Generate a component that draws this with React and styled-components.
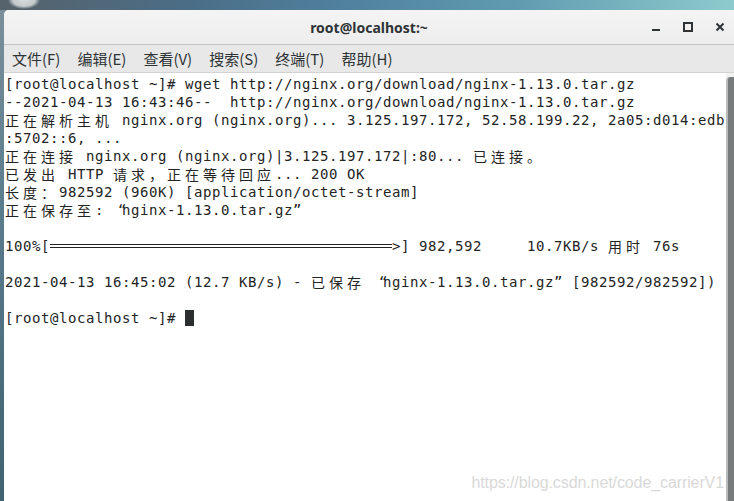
import React from 'react';
import styled, { createGlobalStyle } from 'styled-components';

const Global = createGlobalStyle`
  html, body { margin: 0; padding: 0; width: 734px; height: 501px; overflow: hidden; }
  body { font-family: "Noto Sans", "Noto Sans CJK SC", sans-serif; }
`;

const Desktop = styled.div`
  width: 734px;
  height: 501px;
  box-sizing: border-box;
  padding: 10px 0 0 4px;
  display: flex;
  overflow: hidden;
  background:
    radial-gradient(ellipse 16px 9px at 24px 0px, #d9dcdd 0%, #c4c8ca 70%, transparent 100%) no-repeat,
    linear-gradient(90deg, #56626b 0%, #4b6d86 25%, #4f7f9c 45%, #5f9bb0 70%, #8ccbcd 100%) top left / 100% 10px no-repeat,
    linear-gradient(180deg, #7b919c 0%, #5b7d8d 40%, #3f6373 100%);
`;

const Window = styled.div`
  flex: 1;
  display: flex;
  flex-direction: column;
  background: #ffffff;
  border-top-left-radius: 5px;
  overflow: hidden;
  position: relative;
`;

const TitleBar = styled.div`
  flex: none;
  height: 34px;
  background: linear-gradient(180deg, #f4f4f4, #ededed);
  border-bottom: 1px solid #c3c3c3;
  display: grid;
  grid-template-columns: 1fr auto 1fr;
  align-items: center;
`;

const Title = styled.div`
  grid-column: 2;
  font-family: "Noto Sans", sans-serif;
  font-weight: 700;
  font-size: 14px;
  color: #2e3436;
  padding-top: 1px;
`;

const Controls = styled.div`
  grid-column: 3;
  justify-self: end;
  display: flex;
  margin-right: -2px;
`;

const ControlButton = styled.div`
  width: 32px;
  height: 34px;
  display: flex;
  align-items: center;
  justify-content: center;
  color: #2e3436;
`;

const MenuBar = styled.div`
  flex: none;
  height: 27px;
  background: #e8e8e8;
  border-bottom: 1px solid #d3d3d3;
  display: flex;
  align-items: center;
  gap: 17px;
  padding-left: 8px;
`;

const MenuItem = styled.span`
  font-family: "Noto Sans CJK SC", sans-serif;
  font-size: 15px;
  color: #2e3436;
  line-height: 27px;
`;

const Body = styled.div`
  flex: 1;
  display: flex;
  min-height: 0;
`;

const Screen = styled.div`
  flex: 1;
  padding: 2px 0 0 1px;
  color: #242424;
`;

const Line = styled.div`
  height: 18px;
  line-height: 18px;
  white-space: pre;
  display: flex;
  align-items: center;
`;

const Ascii = styled.span`
  font-family: "DejaVu Sans Mono", monospace;
  font-size: 14px;
  letter-spacing: 0.572px;
`;

const Quote = styled.span`
  display: inline-block;
  width: 9px;
  font-family: "DejaVu Sans Mono", monospace;
  font-size: 14px;
  text-indent: ${p => (p.$open ? '5px' : '0')};
`;

const Cjk = styled.span`
  display: inline-block;
  width: 18px;
  font-family: "Noto Sans CJK SC", sans-serif;
  font-size: 14px;
  line-height: 18px;
`;

const Bar = styled.span`
  display: inline-block;
  width: ${p => p.$cells * 9}px;
  height: 2px;
  border-top: 1px solid #242424;
  border-bottom: 1px solid #242424;
`;

const Cursor = styled.span`
  display: inline-block;
  width: 9px;
  height: 16px;
  background: #2b2f30;
`;

const Scrollbar = styled.div`
  flex: none;
  width: 8px;
  display: flex;
  flex-direction: column;
  background: #f2f2f2;
`;

const Thumb = styled.div`
  flex: 1;
  margin-top: 4px;
  background: #777b7b;
  border-left: 2px solid #b9bbbb;
  border-top-left-radius: 4px;
`;

const Watermark = styled.div`
  position: absolute;
  right: 10px;
  bottom: 9px;
  font-family: "Liberation Sans", Arial, sans-serif;
  font-size: 16px;
  color: #d9d9d9;
  letter-spacing: -0.1px;
`;

const splitRe = /([\u3000-\u303f\u4e00-\u9fff\uff00-\uffef]+|[“”])/;
const cjkRe = /^[\u3000-\u303f\u4e00-\u9fff\uff00-\uffef]+$/;

function Text({ children }) {
  const parts = children.split(splitRe).filter(s => s.length);
  return parts.map((p, i) => {
    if (cjkRe.test(p)) return [...p].map((c, j) => <Cjk key={`${i}-${j}`}>{c}</Cjk>);
    if (p === '“' || p === '”') return <Quote key={i} $open={p === '“'}>{p}</Quote>;
    return <Ascii key={i}>{p}</Ascii>;
  });
}

const lines = [
  '[root@localhost ~]# wget http://nginx.org/download/nginx-1.13.0.tar.gz',
  '--2021-04-13 16:43:46--  http://nginx.org/download/nginx-1.13.0.tar.gz',
  '正在解析主机 nginx.org (nginx.org)... 3.125.197.172, 52.58.199.22, 2a05:d014:edb',
  ':5702::6, ...',
  '正在连接 nginx.org (nginx.org)|3.125.197.172|:80... 已连接。',
  '已发出 HTTP 请求，正在等待回应... 200 OK',
  '长度：982592 (960K) [application/octet-stream]',
  '正在保存至: “nginx-1.13.0.tar.gz”',
];

const menus = ['文件(F)', '编辑(E)', '查看(V)', '搜索(S)', '终端(T)', '帮助(H)'];

export default function App() {
  return (
    <Desktop>
      <Global />
      <Window>
        <TitleBar>
          <Title>root@localhost:~</Title>
          <Controls>
            <ControlButton>
              <svg width="10" height="10" viewBox="0 0 10 10">
                <rect x="1" y="7" width="8" height="2" fill="currentColor" />
              </svg>
            </ControlButton>
            <ControlButton>
              <svg width="10" height="10" viewBox="0 0 10 10">
                <rect x="1" y="1" width="8" height="8" fill="none" stroke="currentColor" strokeWidth="2" />
              </svg>
            </ControlButton>
            <ControlButton>
              <svg width="10" height="10" viewBox="0 0 10 10">
                <path d="M1.5 1.5 L8.5 8.5 M8.5 1.5 L1.5 8.5" stroke="currentColor" strokeWidth="2" />
              </svg>
            </ControlButton>
          </Controls>
        </TitleBar>
        <MenuBar>
          {menus.map(m => <MenuItem key={m}>{m}</MenuItem>)}
        </MenuBar>
        <Body>
          <Screen>
            {lines.map((l, i) => (
              <Line key={i}><Text>{l}</Text></Line>
            ))}
            <Line />
            <Line>
              <Ascii>100%[</Ascii>
              <Bar $cells={38} />
              <Ascii>{'>] 982,592     10.7KB/s '}</Ascii>
              <Text>用时</Text>
              <Ascii> 76s</Ascii>
            </Line>
            <Line />
            <Line>
              <Text>{'2021-04-13 16:45:02 (12.7 KB/s) - 已保存 “nginx-1.13.0.tar.gz” [982592/982592])'}</Text>
            </Line>
            <Line />
            <Line>
              <Ascii>{'[root@localhost ~]# '}</Ascii>
              <Cursor />
            </Line>
          </Screen>
          <Scrollbar>
            <Thumb />
          </Scrollbar>
        </Body>
        <Watermark>https://blog.csdn.net/code_carrierV1</Watermark>
      </Window>
    </Desktop>
  );
}
